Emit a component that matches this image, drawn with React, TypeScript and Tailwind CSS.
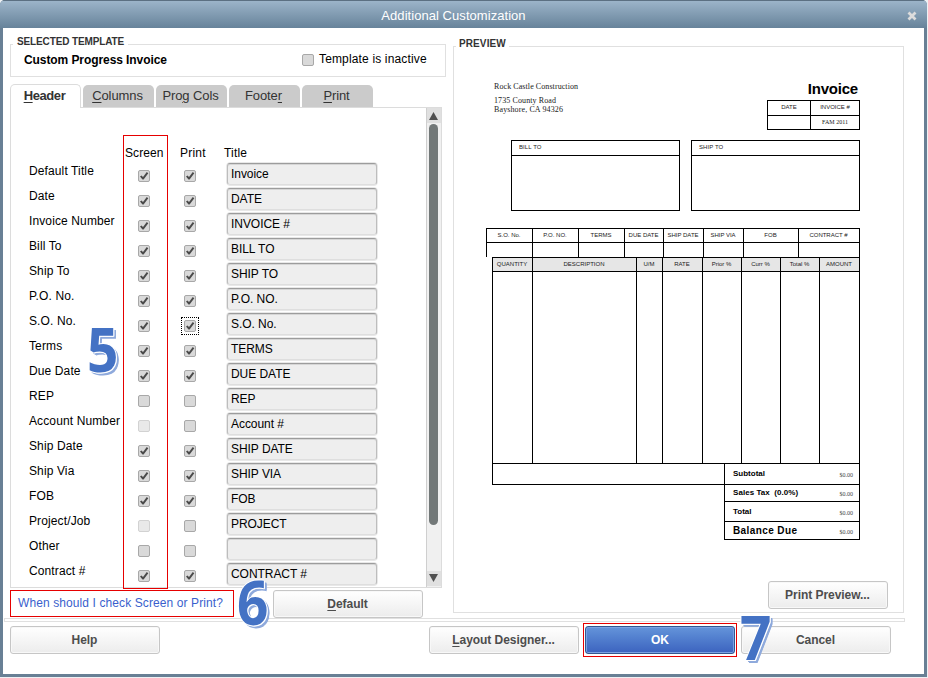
import clsx from "clsx";
import type { ReactNode } from "react";

type CheckState = "on" | "off" | "disabled";

const ROWS: { label: string; screen: CheckState; print: CheckState; title: string; focused?: boolean }[] = [
  { label: "Default Title", screen: "on", print: "on", title: "Invoice" },
  { label: "Date", screen: "on", print: "on", title: "DATE" },
  { label: "Invoice Number", screen: "on", print: "on", title: "INVOICE #" },
  { label: "Bill To", screen: "on", print: "on", title: "BILL TO" },
  { label: "Ship To", screen: "on", print: "on", title: "SHIP TO" },
  { label: "P.O. No.", screen: "on", print: "on", title: "P.O. NO." },
  { label: "S.O. No.", screen: "on", print: "on", title: "S.O. No.", focused: true },
  { label: "Terms", screen: "on", print: "on", title: "TERMS" },
  { label: "Due Date", screen: "on", print: "on", title: "DUE DATE" },
  { label: "REP", screen: "off", print: "off", title: "REP" },
  { label: "Account Number", screen: "disabled", print: "off", title: "Account #" },
  { label: "Ship Date", screen: "on", print: "on", title: "SHIP DATE" },
  { label: "Ship Via", screen: "on", print: "on", title: "SHIP VIA" },
  { label: "FOB", screen: "on", print: "on", title: "FOB" },
  { label: "Project/Job", screen: "disabled", print: "off", title: "PROJECT" },
  { label: "Other", screen: "off", print: "off", title: "" },
  { label: "Contract #", screen: "on", print: "on", title: "CONTRACT #" },
];

const TABS = [
  { before: "", key: "C", after: "olumns" },
  { before: "Pro", key: "g", after: " Cols" },
  { before: "Foote", key: "r", after: "" },
  { before: "", key: "P", after: "rint" },
];

const INFO_COLS = [
  { label: "S.O. No.", width: "w-[46px]" },
  { label: "P.O. NO.", width: "w-[46px]" },
  { label: "TERMS", width: "w-[46px]" },
  { label: "DUE DATE", width: "w-[39px]" },
  { label: "SHIP DATE", width: "w-[40px]" },
  { label: "SHIP VIA", width: "w-[40px]" },
  { label: "FOB", width: "w-[55px]" },
  { label: "CONTRACT #", width: "w-[61px]" },
];

const ITEM_COLS = [
  { label: "QUANTITY", width: "w-[40px]" },
  { label: "DESCRIPTION", width: "w-[104px]" },
  { label: "U/M", width: "w-[26px]" },
  { label: "RATE", width: "w-[40px]" },
  { label: "Prior %", width: "w-[39px]" },
  { label: "Curr %", width: "w-[39px]" },
  { label: "Total %", width: "w-[39px]" },
  { label: "AMOUNT", width: "w-[40px]" },
];

const TOTALS = [
  { label: "Subtotal", style: "h-[21px] text-[8px]" },
  { label: "Sales Tax  (0.0%)", style: "h-[17px] text-[8px] tracking-[0.05px]" },
  { label: "Total", style: "h-[20px] text-[8px]" },
  { label: "Balance Due", style: "h-[18px] text-[10px] tracking-[0.4px]" },
];

function Check({ state, className }: { state: CheckState; className?: string }) {
  return (
    <span
      className={clsx(
        "block size-3 shrink-0 rounded-[2px] border",
        state === "disabled" ? "border-[#d2d2d2] bg-[#e9e9e9]" : "border-[#a8a8a8] bg-[#d9d9d9]",
        className
      )}
    >
      {state === "on" && (
        <svg viewBox="0 0 10 10" className="block size-2.5">
          <path d="M1 5.6 2.5 4.4 4 5.9 7.8 1 9.3 2.2 4.6 8.6 3.5 8.6z" fill="#4a4a4a" />
        </svg>
      )}
    </span>
  );
}

function PushButton({ children, className }: { children: ReactNode; className?: string }) {
  return (
    <button
      className={clsx(
        "h-7 shrink-0 rounded-[3px] border border-[#c6c6c6] bg-linear-to-b from-white to-[#ececec] pr-px text-[12px] font-bold tracking-[-0.05px] text-[#4d4d4d] shadow-[inset_0_0_0_1px_#f8f8f8]",
        className
      )}
    >
      {children}
    </button>
  );
}

function StepNumber({ value, className }: { value: string; className: string }) {
  return (
    <span
      className={clsx(
        "pointer-events-none absolute z-20 block origin-top-left scale-x-90 font-['Open_Sans',sans-serif] text-[61px] leading-[61px] font-bold text-[#4472c4] [text-shadow:1px_0_0_#fff,0_1px_0_#fff,1px_1px_0_#fff,-1px_0_0_#fff,0_-1px_0_#fff,2px_2px_0_#8faadc,3px_3px_0_#8faadc,3px_2px_0_#8faadc]",
        className
      )}
    >
      {value}
    </span>
  );
}

function AddressBox({ label }: { label: string }) {
  return (
    <div className="h-[71px] w-[169px] border border-black">
      <div className="h-[15px] border-b border-black pl-[7px] text-[6px] leading-[13px] tracking-[0.1px]">{label}</div>
    </div>
  );
}

function InvoicePaper() {
  return (
    <div className="flex flex-col pr-[43px] pl-8 text-[#222]">
      <div className="flex h-[93px] justify-between">
        <div className="pt-[35px] pl-2 font-['Liberation_Serif',serif] text-[8px] leading-[9px]">
          <p className="tracking-[0.08px]">Rock Castle Construction</p>
          <p className="mt-[5px] tracking-[0.1px]">1735 County Road</p>
          <p className="tracking-[0.12px]">Bayshore, CA 94326</p>
        </div>
        <div className="w-[93px] pt-8">
          <h2 className="h-[21px] pr-0.5 text-right text-[15px] leading-[20px] font-bold tracking-[-0.2px] text-black">Invoice</h2>
          <div className="grid h-[30px] grid-cols-[43px_50px] grid-rows-[14px_16px] border-t border-black text-center text-[6px] leading-[13px]">
            <span className="border-l border-black">DATE</span>
            <span className="border-x border-black">INVOICE #</span>
            <span className="h-[15px] border-y border-l border-black" />
            <span className="h-[15px] border border-black font-['Liberation_Serif',serif] leading-[12px]">FAM 2011</span>
          </div>
        </div>
      </div>

      <div className="ml-[25px] flex gap-[11px]">
        <AddressBox label="BILL TO" />
        <AddressBox label="SHIP TO" />
      </div>

      <div className="mt-[17px] flex h-[29px] border-t border-r border-black">
        {INFO_COLS.map((col) => (
          <div key={col.label} className={clsx("border-l border-black", col.width)}>
            <div className="h-[14px] border-b border-black pr-px text-center text-[6px] leading-[13px] whitespace-nowrap">{col.label}</div>
          </div>
        ))}
      </div>

      <div className="ml-1.5 flex h-[206px] border-t border-r border-black">
        {ITEM_COLS.map((col) => (
          <div key={col.label} className={clsx("border-l border-black", col.width)}>
            <div className="h-[14px] border-b border-black bg-[#e6e6e6] pr-px text-center text-[6px] leading-[13px] whitespace-nowrap">
              {col.label}
            </div>
          </div>
        ))}
      </div>

      <div className="ml-1.5 flex items-start border-t border-black">
        <div className="h-[21px] w-[232px] border-b border-l border-black" />
        <div className="w-[136px] border-x border-black">
          {TOTALS.map((row) => (
            <div key={row.label} className={clsx("flex items-center justify-between border-b border-black pr-[6px] pl-2 font-bold text-black", row.style)}>
              <span className="whitespace-pre">{row.label}</span>
              <span className="pt-[3px] font-['Liberation_Serif',serif] text-[6px] font-normal tracking-normal text-[#444]">$0.00</span>
            </div>
          ))}
        </div>
      </div>
    </div>
  );
}

function FieldsPanel() {
  return (
    <div className="flex h-[481px] w-[432px] border border-[#dcdcdc]">
      <div className="flex-1 text-[12px] leading-4 text-black">
        <div className="flex h-[54px] items-end pb-px pl-[114px]">
          <span className="w-[55px] tracking-[0.1px]">Screen</span>
          <span className="w-[44px] tracking-[0.2px]">Print</span>
          <span className="tracking-[0.2px]">Title</span>
        </div>
        {ROWS.map((row) => (
          <div key={row.label} className="flex h-[25px] items-start pl-[18px]">
            <span className="w-[109px] pt-px tracking-[0.12px] whitespace-nowrap">{row.label}</span>
            <Check state={row.screen} className="mt-2" />
            <span className="relative mt-2 mr-[30px] ml-[34px]">
              <Check state={row.print} />
              {row.focused && <span className="absolute -inset-[3px] border border-dotted border-black" />}
            </span>
            <span className="h-6 w-[152px] rounded-[4px] border border-[#e8e8e8] bg-[#eee]">
              <span className="block h-[22px] rounded-[3px] border border-t-[#9c9c9c] border-r-[#bdbdbd] border-b-[#dedede] border-l-[#bdbdbd] pl-[3px] leading-[21px] tracking-[-0.05px] shadow-[inset_0_1px_0_#d6d6d6]">
                {row.title}
              </span>
            </span>
          </div>
        ))}
      </div>
      <div className="flex w-[15px] flex-col border-l border-[#cfcfcf] bg-[#f0f0f0]">
        <div className="flex h-[15px] items-center justify-center bg-[#e0e0e0] pr-px">
          <svg viewBox="0 0 9 8" className="h-2 w-[9px]">
            <path d="M4.5 0 9 8H0z" fill="#505050" />
          </svg>
        </div>
        <div className="mt-px ml-0.5 h-[401px] w-[9px] rounded-full bg-[#727878]" />
        <div className="mt-auto mb-px flex h-[15px] items-center justify-center bg-[#e0e0e0] pr-px pb-px">
          <svg viewBox="0 0 9 8" className="h-2 w-[9px]">
            <path d="M4.5 8 9 0H0z" fill="#505050" />
          </svg>
        </div>
      </div>
    </div>
  );
}

export default function App() {
  return (
    <div className="relative h-[678px] w-[928px] overflow-hidden bg-[#eef1f4] font-['Liberation_Sans',Arial,sans-serif]">
      <div className="flex h-[677px] w-[927px] flex-col overflow-hidden rounded-t-[5px] bg-[#688095]">
        <header className="flex h-7 items-center border-t border-[#5c7082] bg-linear-to-b from-[#9cb4c9] to-[#67839a] pr-2.5">
          <h1 className="flex-1 pt-[3px] text-center text-[13px] leading-4 tracking-[0.05px] text-white">Additional Customization</h1>
          <svg viewBox="0 0 10 10" className="mt-[3px] size-2.5">
            <path d="M1.5 1.5l7 7M8.5 1.5l-7 7" stroke="#dcdcdc" strokeWidth="2.8" />
          </svg>
        </header>

        <main className="mx-[3px] h-[646px] bg-white">
          <div className="flex h-[590px] pl-[7px]">
            <div className="w-[436px] pt-4">
              <section className="relative flex h-[33px] items-center border border-[#e0e0e0] pl-[13px]">
                <span className="absolute -top-[9px] left-0.5 bg-white px-1 text-[10px] leading-3 font-bold tracking-[-0.13px] text-[#333]">
                  SELECTED TEMPLATE
                </span>
                <span className="-mt-0.5 w-[278px] text-[12px] leading-4 font-bold tracking-[-0.08px] text-black">Custom Progress Invoice</span>
                <Check state="off" className="-mt-0.5" />
                <span className="-mt-1 ml-[5px] text-[12px] leading-4 tracking-[0.15px] text-black">Template is inactive</span>
              </section>

              <nav className="mt-[7px] flex h-[23px] items-end gap-0.5 text-[13px] tracking-[-0.1px] text-[#333]">
                <button className="relative -mb-px h-6 w-[71px] rounded-t-[5px] border border-b-0 border-[#dcdcdc] bg-white pr-0.5 pb-0.5 leading-[21px] font-bold tracking-[-0.4px]">
                  <u className="underline-offset-2">H</u>eader
                </button>
                {TABS.map((tab) => (
                  <button key={tab.key} className="h-[22px] w-[71px] rounded-t-[5px] bg-[#cbcbcb] pr-0.5 leading-[22px]">
                    {tab.before}
                    <u className="underline-offset-2">{tab.key}</u>
                    {tab.after}
                  </button>
                ))}
              </nav>
              <FieldsPanel />

              <div className="mt-0.5 flex h-7 items-start">
                <a className="h-[27px] w-[224px] border border-[#e60000] pl-[7px] text-[12px] leading-[24px] tracking-[0.1px] text-[#3a5fcd]">
                  When should I check Screen or Print?
                </a>
                <PushButton className="ml-[39px] w-[150px]">
                  <u className="underline-offset-2">D</u>efault
                </PushButton>
              </div>
            </div>

            <section className="relative mt-[18px] ml-[7px] flex h-[567px] w-[451px] flex-col border border-[#e0e0e0]">
              <span className="absolute -top-[9px] left-0.5 bg-white px-[3px] text-[10px] leading-3 font-bold tracking-[0.1px] text-[#333]">PREVIEW</span>
              <InvoicePaper />
              <PushButton className="mt-auto mr-[15px] mb-[3px] ml-auto w-[120px]">Print Preview...</PushButton>
            </section>
          </div>

          <div className="ml-px h-1 w-[901px] border border-[#e0e0e0]" />

          <footer className="mt-1 flex pl-[7px]">
            <PushButton className="w-[150px]">Help</PushButton>
            <PushButton className="ml-[269px] w-[150px]">
              <u className="underline-offset-2">L</u>ayout Designer...
            </PushButton>
            <div className="-mt-[3px] ml-1 h-[34px] w-[154px] border border-[#e60000] px-px pt-0.5">
              <button className="h-7 w-[150px] rounded-[3px] border border-[#34568f] bg-linear-to-b from-[#6494da] to-[#3c63bf] text-[12px] font-bold text-white shadow-[inset_0_0_0_1px_#7ba2e2]">
                OK
              </button>
            </div>
            <PushButton className="ml-1 w-[150px]">Cancel</PushButton>
          </footer>
        </main>
      </div>

      {/* step callouts drawn over the dialog */}
      <div className="pointer-events-none absolute top-[135px] left-[123px] z-10 h-[454px] w-[45px] border border-[#e60000]" />
      <StepNumber value="5" className="top-[318px] left-[87px]" />
      <StepNumber value="6" className="top-[571px] left-[237px]" />
      <StepNumber value="7" className="top-[606px] left-[740px]" />
    </div>
  );
}
